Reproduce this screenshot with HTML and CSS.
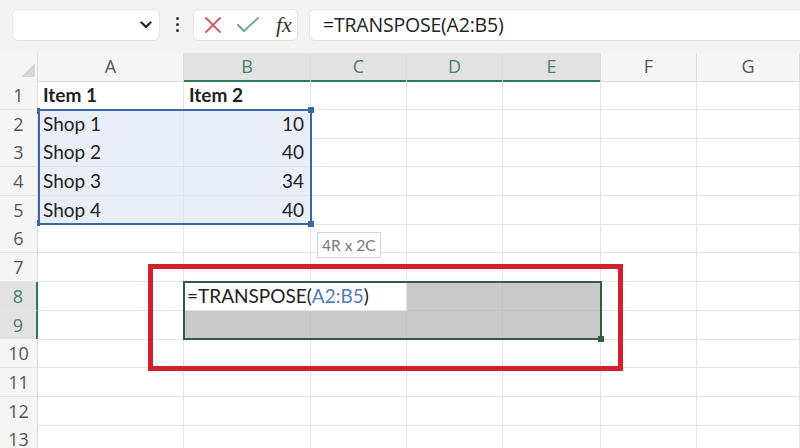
FILE: index.html
```html
<!DOCTYPE html>
<html lang="en">
<head>
    <meta charset="UTF-8">
    <title>TRANSPOSE</title>
    <link rel="stylesheet" href="styles.css">
</head>
<body>
    <div class="toolbar">
        <div class="name-box">
            <svg class="chevron" width="12" height="8" viewBox="0 0 12 8"><path d="M1.5 1.5 L6 6 L10.5 1.5" fill="none" stroke="#222" stroke-width="2.2" stroke-linecap="round" stroke-linejoin="round"/></svg>
        </div>
        <div class="dots"><span></span><span></span><span></span></div>
        <div class="fx-box">
            <svg width="18" height="18" viewBox="0 0 18 18"><path d="M2 2 L16 16 M16 2 L2 16" stroke="#cf5a66" stroke-width="1.8" stroke-linecap="round"/></svg>
            <svg width="24" height="18" viewBox="0 0 24 18"><path d="M2 9 L8 15 L22 2" fill="none" stroke="#6aa58a" stroke-width="1.8" stroke-linecap="round" stroke-linejoin="round"/></svg>
            <span class="fx">fx</span>
        </div>
        <div class="formula-box">=TRANSPOSE(A2:B5)</div>
    </div>

    <div class="sheet">
        <div class="row head">
            <div class="corner"><svg width="14" height="14" viewBox="0 0 14 14"><path d="M14 0 L14 14 L0 14 Z" fill="#d6d6d6"/></svg></div>
            <div class="col">A</div>
            <div class="col on">B</div>
            <div class="col on">C</div>
            <div class="col on">D</div>
            <div class="col on">E</div>
            <div class="col">F</div>
            <div class="col">G</div>
        </div>
        <div class="row">
            <div class="num">1</div>
            <div class="cell bold">Item 1</div>
            <div class="cell bold">Item 2</div>
            <div class="cell"></div><div class="cell"></div><div class="cell"></div><div class="cell"></div><div class="cell"></div>
        </div>
        <div class="row">
            <div class="num">2</div>
            <div class="cell sel">Shop 1</div>
            <div class="cell sel right">10</div>
            <div class="cell"></div><div class="cell"></div><div class="cell"></div><div class="cell"></div><div class="cell"></div>
        </div>
        <div class="row">
            <div class="num">3</div>
            <div class="cell sel">Shop 2</div>
            <div class="cell sel right">40</div>
            <div class="cell"></div><div class="cell"></div><div class="cell"></div><div class="cell"></div><div class="cell"></div>
        </div>
        <div class="row">
            <div class="num">4</div>
            <div class="cell sel">Shop 3</div>
            <div class="cell sel right">34</div>
            <div class="cell"></div><div class="cell"></div><div class="cell"></div><div class="cell"></div><div class="cell"></div>
        </div>
        <div class="row">
            <div class="num">5</div>
            <div class="cell sel">Shop 4</div>
            <div class="cell sel right">40</div>
            <div class="cell"></div><div class="cell"></div><div class="cell"></div><div class="cell"></div><div class="cell"></div>
        </div>
        <div class="row">
            <div class="num">6</div>
            <div class="cell"></div><div class="cell"></div><div class="cell"></div><div class="cell"></div><div class="cell"></div><div class="cell"></div><div class="cell"></div>
        </div>
        <div class="row">
            <div class="num">7</div>
            <div class="cell"></div><div class="cell"></div><div class="cell"></div><div class="cell"></div><div class="cell"></div><div class="cell"></div><div class="cell"></div>
        </div>
        <div class="row">
            <div class="num on">8</div>
            <div class="cell"></div>
            <div class="cell edit">=TRANSPOSE(<span class="ref">A2:B5</span>)</div>
            <div class="cell blank"></div>
            <div class="cell spill"></div>
            <div class="cell spill"></div>
            <div class="cell"></div><div class="cell"></div>
        </div>
        <div class="row">
            <div class="num on">9</div>
            <div class="cell"></div>
            <div class="cell spill"></div>
            <div class="cell spill"></div>
            <div class="cell spill"></div>
            <div class="cell spill"></div>
            <div class="cell"></div><div class="cell"></div>
        </div>
        <div class="row">
            <div class="num">10</div>
            <div class="cell"></div><div class="cell"></div><div class="cell"></div><div class="cell"></div><div class="cell"></div><div class="cell"></div><div class="cell"></div>
        </div>
        <div class="row">
            <div class="num">11</div>
            <div class="cell"></div><div class="cell"></div><div class="cell"></div><div class="cell"></div><div class="cell"></div><div class="cell"></div><div class="cell"></div>
        </div>
        <div class="row">
            <div class="num">12</div>
            <div class="cell"></div><div class="cell"></div><div class="cell"></div><div class="cell"></div><div class="cell"></div><div class="cell"></div><div class="cell"></div>
        </div>
        <div class="row">
            <div class="num">13</div>
            <div class="cell"></div><div class="cell"></div><div class="cell"></div><div class="cell"></div><div class="cell"></div><div class="cell"></div><div class="cell"></div>
        </div>

        <!-- overlays -->
        <div class="source-range"><i class="h tl"></i><i class="h tr"></i><i class="h bl"></i><i class="h br"></i></div>
        <div class="size-tip">4R x 2C</div>
        <div class="spill-range"><i class="h br"></i></div>
        <div class="callout"></div>
    </div>
</body>
</html>
```

FILE: styles.css
```css
body {
    margin: 0;
    width: 800px;
    height: 448px;
    overflow: hidden;
    background: #ffffff;
    font-family: Lato, "Open Sans", sans-serif;
    color: #222;
}

.toolbar {
    display: flex;
    align-items: center;
    height: 53px;
    padding: 0 0 4px 12px;
    box-sizing: border-box;
    background: #f3f3f3;
}

.name-box,
.fx-box,
.formula-box {
    height: 32px;
    background: #fff;
    border: 1px solid #e4e4e4;
    border-radius: 6px;
    box-sizing: border-box;
}

.name-box {
    width: 148px;
    display: flex;
    align-items: center;
    justify-content: flex-end;
    padding-right: 7px;
}

.dots {
    display: flex;
    flex-direction: column;
    gap: 3px;
    margin: 0 14px 0 16px;
}

.dots span {
    width: 3px;
    height: 3px;
    border-radius: 50%;
    background: #333;
}

.fx-box {
    width: 105px;
    display: flex;
    align-items: center;
    gap: 14px;
    padding-left: 10px;
}

.fx {
    font-family: "Liberation Serif", serif;
    font-style: italic;
    font-size: 22px;
    color: #333;
    margin-left: 2px;
}

.formula-box {
    flex: 1;
    margin-left: 11px;
    border-right: none;
    border-radius: 6px 0 0 6px;
    padding-left: 13px;
    font-family: "Open Sans", sans-serif;
    font-size: 19.5px;
    line-height: 29px;
    letter-spacing: -0.2px;
}

.sheet {
    position: relative;
}

.row {
    display: grid;
    grid-template-columns: 38px 146px 127px 96px 96px 98px 96px 103px;
    height: 28.7px;
}

.row.head {
    height: 28px;
    background: #f5f5f5;
}

.corner {
    display: flex;
    align-items: flex-end;
    justify-content: flex-end;
    padding: 0 2px 4px 0;
    border-right: 1px solid #dcdcdc;
    border-bottom: 1px solid #dcdcdc;
}

.col {
    text-align: center;
    font-family: "Open Sans", sans-serif;
    font-size: 18px;
    line-height: 27px;
    color: #555;
    border-right: 1px solid #dcdcdc;
    border-bottom: 1px solid #dcdcdc;
}

.col.on {
    background: #e2e2e2;
    color: #4a7f68;
    border-bottom: 2px solid #2f7a55;
}

.num {
    background: #f5f5f5;
    font-family: "Open Sans", sans-serif;
    font-size: 18px;
    line-height: 28px;
    color: #555;
    text-align: center;
    border-right: 1px solid #dcdcdc;
    border-bottom: 1px solid #e6e6e6;
    box-sizing: border-box;
}

.num.on {
    background: #e2e2e2;
    color: #4a7f68;
    border-right: 2px solid #2f7a55;
}

.cell {
    font-size: 19px;
    line-height: 28px;
    padding: 0 5px;
    border-right: 1px solid #e4e4e4;
    border-bottom: 1px solid #e4e4e4;
    box-sizing: border-box;
    white-space: nowrap;
}

.cell.bold {
    font-weight: bold;
}

.cell.sel {
    background: #e9eef8;
    border-color: #dde2ec;
}

.cell.right {
    text-align: right;
    padding-right: 6px;
}

.cell.edit {
    position: relative;
    z-index: 1;
    background: #fff;
    border-right-color: #fff;
    overflow: visible;
    padding-left: 3px;
}

.cell.blank {
    background: #fff;
}

.ref {
    color: #4f7ab3;
}

.cell.spill {
    background: #c9c9c9;
    border-color: #c2c2c2;
}

.source-range {
    position: absolute;
    left: 38px;
    top: 55.7px;
    width: 274px;
    height: 116px;
    border: 2px solid #3c67a6;
    box-sizing: border-box;
}

.spill-range {
    position: absolute;
    z-index: 2;
    left: 183px;
    top: 227.9px;
    width: 419px;
    height: 59px;
    border: 2px solid #335c45;
    box-sizing: border-box;
}

.h {
    position: absolute;
    width: 6px;
    height: 6px;
    background: #3c67a6;
}

.source-range .tl { left: -3px; top: -3px; width: 3px; }
.source-range .tr { right: -4px; top: -4px; }
.source-range .bl { left: -3px; bottom: -3px; width: 3px; }
.source-range .br { right: -4px; bottom: -4px; }

.spill-range .br {
    right: -4px;
    bottom: -4px;
    background: #335c45;
}

.size-tip {
    position: absolute;
    left: 317px;
    top: 179px;
    height: 26px;
    padding: 0 4px;
    background: #fff;
    border: 1px solid #d4d4d4;
    font-size: 15.5px;
    line-height: 25px;
    color: #777;
    box-sizing: border-box;
}

.callout {
    position: absolute;
    z-index: 3;
    left: 148px;
    top: 211px;
    width: 475px;
    height: 107px;
    border: 5px solid #d3202f;
    box-sizing: border-box;
}
```
